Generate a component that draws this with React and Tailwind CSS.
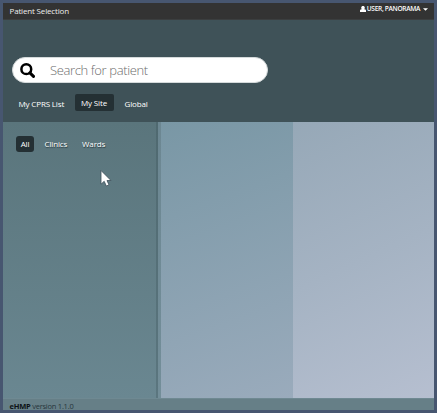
function UserIcon() {
  return (
    <svg viewBox="0 0 12 12" className="h-[6px] w-[6px] shrink-0" fill="currentColor">
      <path d="M6 0C4 0 2.400 1.300 2.400 3.500c0 1.300.4 2.200 1.100 2.900L1.200 7.200C.3 7.700 0 8.300 0 9.200V12h12V9.200c0-.9-.3-1.500-1.200-2L8.500 6.400c.7-.7 1.100-1.600 1.100-2.900C9.600 1.300 8 0 6 0z" />
    </svg>
  );
}

function SearchIcon() {
  return (
    <svg viewBox="0 0 15 15" className="h-[15px] w-[15px] shrink-0" fill="none" stroke="black">
      <circle cx="6.300" cy="6.200" r="4.900" strokeWidth="2.500" />
      <path d="M9.900 9.900L13.500 13.400" strokeWidth="3" strokeLinecap="round" />
    </svg>
  );
}

function TopBar() {
  return (
    <header className="flex h-[17px] shrink-0 items-start justify-between border-b border-[#3b3e3f] bg-[#333333] pl-[6.500px] pr-[6px] text-white">
      <h1 className="mt-[2px] text-[8px] font-medium leading-[12px] tracking-[-0.17px] text-[#eeeeee]">Patient Selection</h1>
      <button className="flex items-center whitespace-nowrap text-[6.600px] font-semibold leading-[12px] tracking-[-0.32px]">
        <UserIcon />
        <span className="ml-px">USER, PANORAMA</span>
        <svg viewBox="0 0 8 4" className="ml-[3px] h-[3px] w-[5px]" fill="currentColor">
          <path d="M0 0h8L4 4z" />
        </svg>
      </button>
    </header>
  );
}

function SearchArea() {
  return (
    <section className="flex h-[102px] shrink-0 flex-col bg-[#3f5258] pl-[9px] pt-[37px]">
      <div className="flex h-[26px] w-[256px] shrink-0 items-center rounded-full border border-[#d5dadb] bg-white pl-[7px]">
        <SearchIcon />
        <span className="ml-[15px] text-[13px] font-light leading-[18px] tracking-[-0.37px] text-[#6c6c6c]">Search for patient</span>
      </div>
      <nav className="mt-[11px] flex h-[17px] items-center whitespace-nowrap text-[8px] font-medium leading-[17px] tracking-[-0.15px] text-white">
        <span className="ml-[6.500px] w-[56px] pt-px">My CPRS List</span>
        <span className="h-[17px] w-[39px] rounded-[2px] bg-[#243034] text-center">My Site</span>
        <span className="ml-[11px] pt-px">Global</span>
      </nav>
    </section>
  );
}

function Panels() {
  return (
    <main className="flex min-h-0 flex-1">
      <aside className="w-[153px] shrink-0 bg-linear-to-b from-[#5a757c] to-[#6a8791] pl-[13px] pt-[14px]">
        <nav className="flex h-[16px] items-center whitespace-nowrap text-[8px] font-medium leading-[16px] tracking-[-0.15px] text-white [text-shadow:0.5px_1px_1px_#26363b]">
          <span className="h-[16px] w-[18px] rounded-[3px] bg-[#243034] text-center">All</span>
          <span className="ml-[10.500px]">Clinics</span>
          <span className="ml-[15px]">Wards</span>
        </nav>
      </aside>
      <div className="w-[2px] shrink-0 bg-linear-to-b from-[#4f6970] to-[#5b767f]" />
      <div className="w-[3px] shrink-0 bg-linear-to-b from-[#6c8792] to-[#738e99]" />
      <div className="w-[132px] shrink-0 bg-linear-[160deg] from-[#7997a5] to-[#9aabbc]" />
      <div className="flex-1 bg-linear-[155deg] from-[#96a8b7] via-[#a5b3c3] to-[#b6bfd0]" />
    </main>
  );
}

function Pointer() {
  return (
    <svg viewBox="0 0 12 18" className="absolute left-[97px] top-[166px] h-[18px] w-[12px]">
      <path
        d="M1 1.500V15.200L4.200 12.300L6.300 17L9 15.900L7 11.500H11Z"
        fill="white"
        stroke="#3e4e59"
        strokeWidth="0.8"
      />
    </svg>
  );
}

export default function App() {
  return (
    <div className="relative flex h-[413px] w-[437px] flex-col overflow-hidden border-[3px] border-[#475670] font-['Open_Sans','Noto_Sans',sans-serif]">
      <TopBar />
      <SearchArea />
      <Panels />
      <footer className="h-[12px] shrink-0 overflow-hidden border-t border-[#6f8992] bg-[#667f87] pl-[6.500px] text-[7.500px] leading-[14px] tracking-[-0.24px] text-[#27363c]">
        <strong className="font-bold text-[#0c1214]">eHMP</strong> version 1.1.0
      </footer>
      <Pointer />
    </div>
  );
}
